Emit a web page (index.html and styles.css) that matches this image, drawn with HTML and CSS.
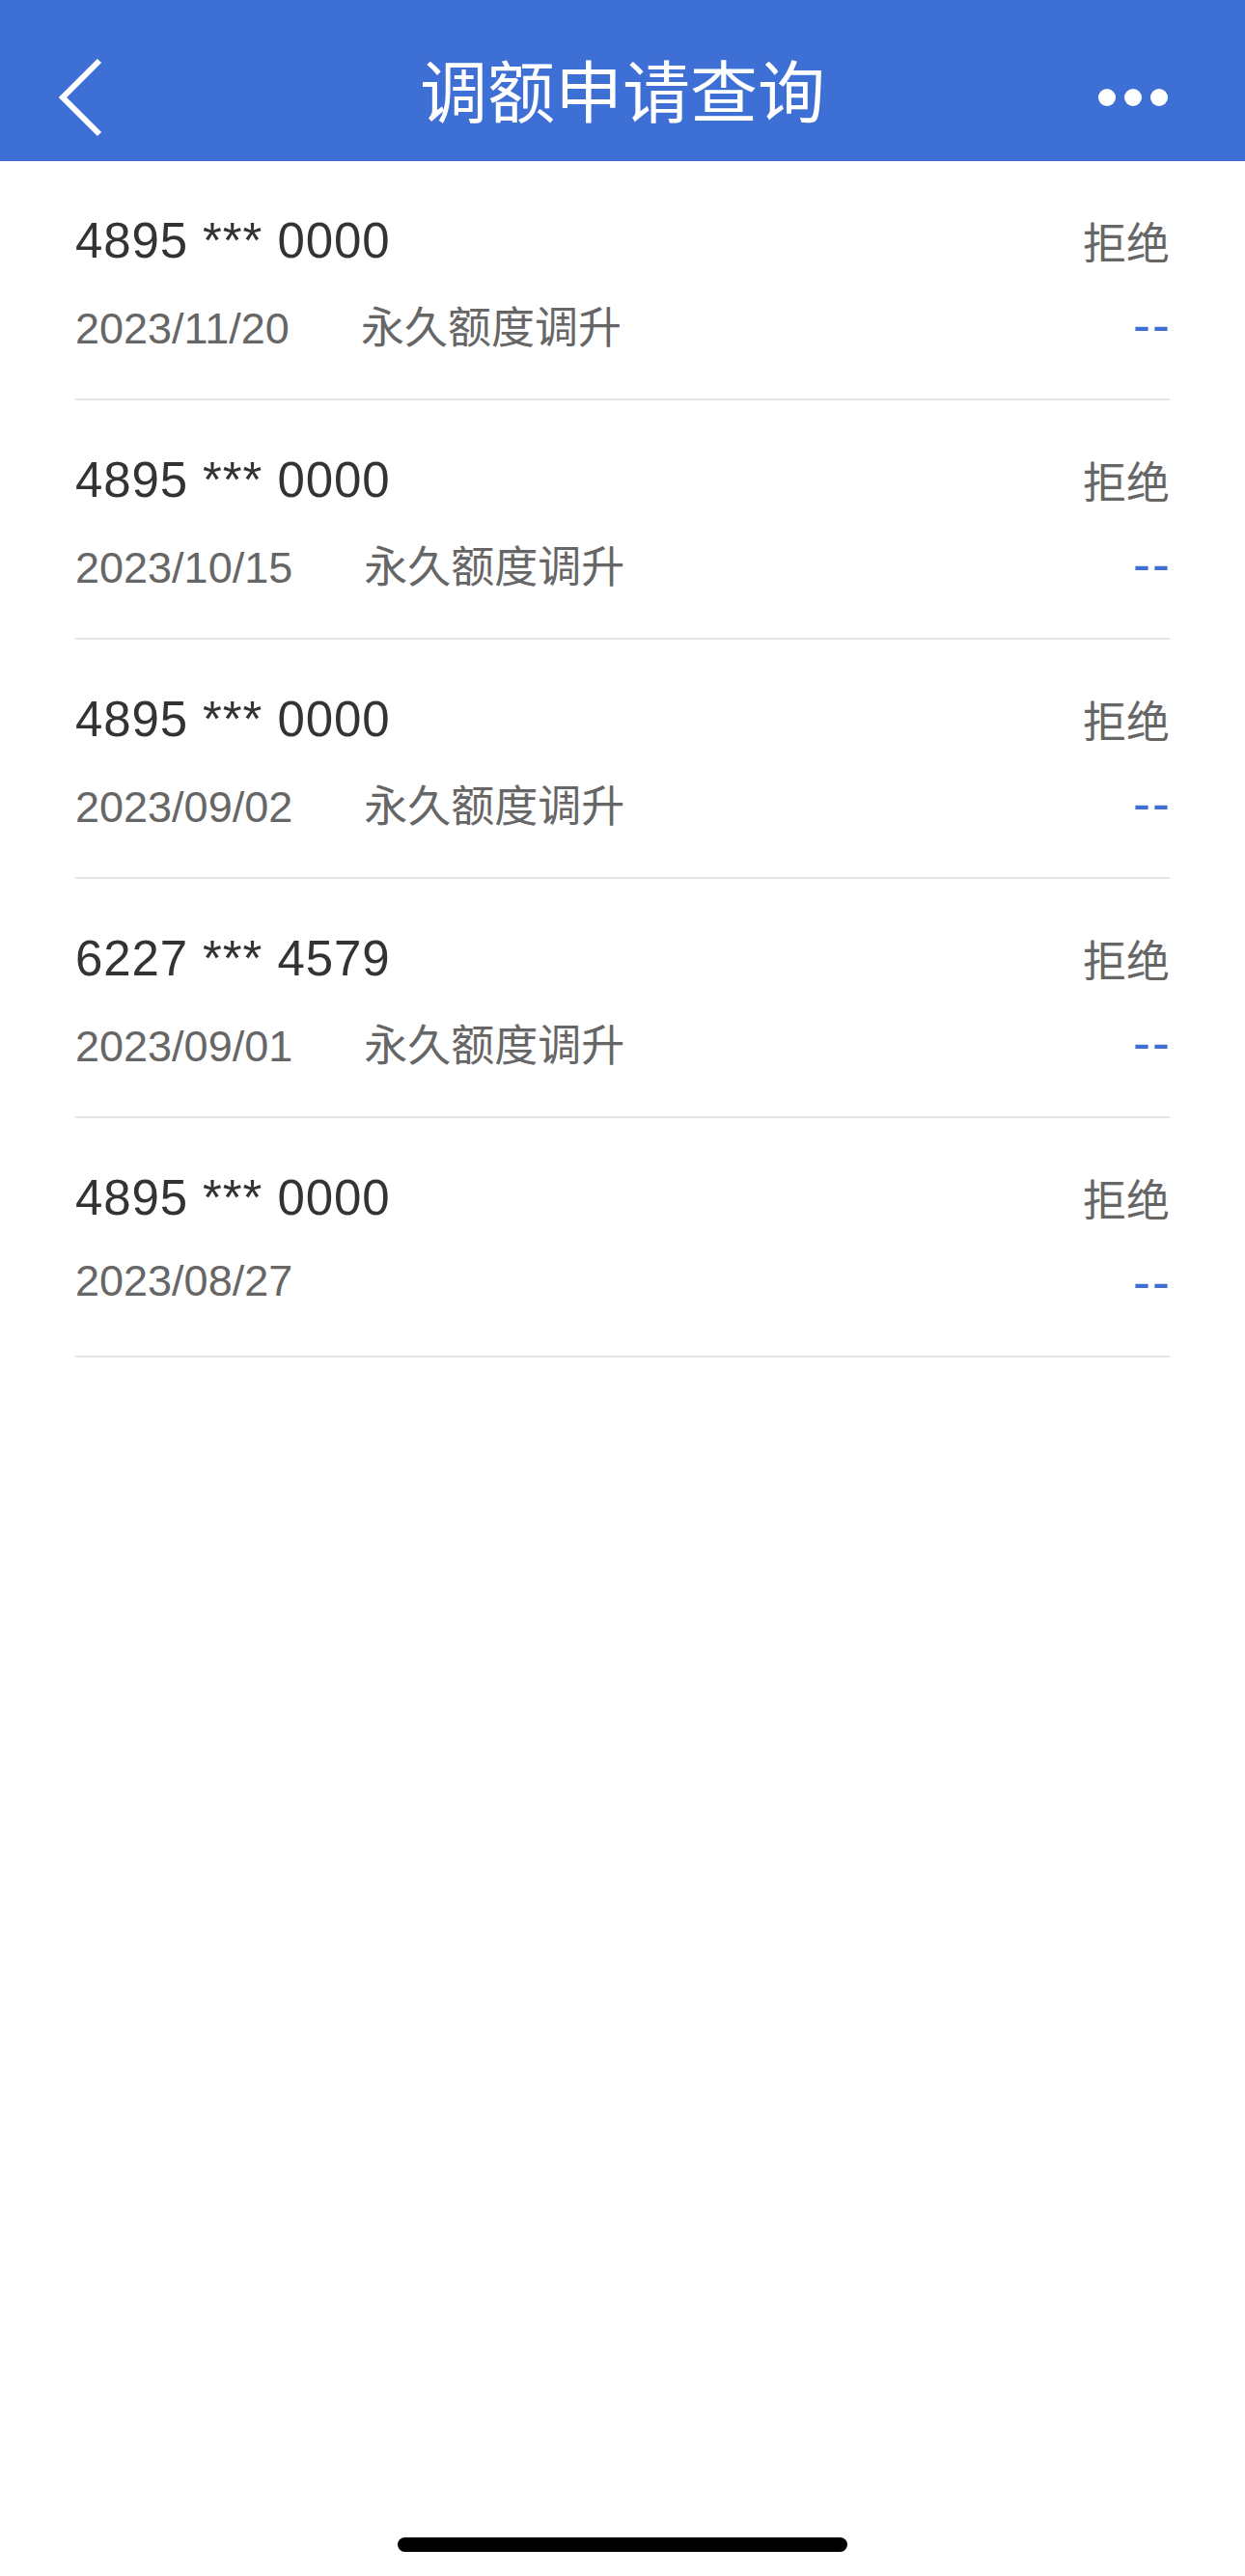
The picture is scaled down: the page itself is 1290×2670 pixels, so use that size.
FILE: index.html
```html
<!DOCTYPE html>
<html lang="zh-CN">
<head>
    <meta charset="utf-8">
    <title>调额申请查询</title>
    <meta name="viewport" content="width=device-width, initial-scale=1">
    <link rel="stylesheet" href="styles.css">
</head>
<body>
    <header class="nav-bar">
        <a class="nav-back" href="#">
            <svg width="56" height="90" viewBox="0 0 56 90">
                <polyline points="45,7 7,45 45,83" fill="none" stroke="#fff" stroke-width="6"/>
            </svg>
        </a>
        <h1 class="nav-title">调额申请查询</h1>
        <a class="nav-more" href="#">
            <svg width="80" height="20" viewBox="0 0 80 20">
                <circle cx="17" cy="10" r="9" fill="#fff"/>
                <circle cx="44" cy="10" r="9" fill="#fff"/>
                <circle cx="71" cy="10" r="9" fill="#fff"/>
            </svg>
        </a>
    </header>

    <ul class="record-list">
        <li class="record">
            <div class="record-top">
                <span class="card-no">4895 *** 0000</span>
                <span class="status">拒绝</span>
            </div>
            <div class="record-bottom">
                <span class="date">2023/11/20<span class="type">永久额度调升</span></span>
                <span class="amount">--</span>
            </div>
        </li>
        <li class="record">
            <div class="record-top">
                <span class="card-no">4895 *** 0000</span>
                <span class="status">拒绝</span>
            </div>
            <div class="record-bottom">
                <span class="date">2023/10/15<span class="type">永久额度调升</span></span>
                <span class="amount">--</span>
            </div>
        </li>
        <li class="record">
            <div class="record-top">
                <span class="card-no">4895 *** 0000</span>
                <span class="status">拒绝</span>
            </div>
            <div class="record-bottom">
                <span class="date">2023/09/02<span class="type">永久额度调升</span></span>
                <span class="amount">--</span>
            </div>
        </li>
        <li class="record">
            <div class="record-top">
                <span class="card-no">6227 *** 4579</span>
                <span class="status">拒绝</span>
            </div>
            <div class="record-bottom">
                <span class="date">2023/09/01<span class="type">永久额度调升</span></span>
                <span class="amount">--</span>
            </div>
        </li>
        <li class="record">
            <div class="record-top">
                <span class="card-no">4895 *** 0000</span>
                <span class="status">拒绝</span>
            </div>
            <div class="record-bottom">
                <span class="date">2023/08/27</span>
                <span class="amount">--</span>
            </div>
        </li>
    </ul>

    <div class="home-indicator"></div>
</body>
</html>
```

FILE: styles.css
```css
body {
    font-family: "Liberation Sans", "Noto Sans CJK SC", sans-serif;
    margin: 0;
    min-height: 100vh;
    display: flex;
    flex-direction: column;
    background-color: #ffffff;
    color: #333333;
}
.nav-bar {
    height: 167px;
    box-sizing: border-box;
    padding: 34px 58px 0;
    background-color: #3d6fd4;
    display: grid;
    grid-template-columns: 1fr auto 1fr;
    align-items: center;
}
.nav-back {
    display: flex;
    justify-self: start;
}
.nav-title {
    margin: 0 0 18px;
    font-family: "Noto Sans CJK SC", sans-serif;
    font-size: 70px;
    font-weight: 400;
    line-height: 1;
    color: #ffffff;
}
.nav-more {
    display: flex;
    justify-self: end;
    margin-right: 22px;
}
.record-list {
    list-style: none;
    margin: 0;
    padding: 0;
}
.record {
    margin: 0 78px;
    padding: 52px 0 52px;
    border-bottom: 2px solid #e5e5e5;
}
.record-top,
.record-bottom {
    display: flex;
    justify-content: space-between;
    align-items: center;
}
.record-top {
    height: 60px;
}
.record-bottom {
    height: 50px;
    margin-top: 32px;
}
.card-no {
    font-size: 51px;
    letter-spacing: 0.9px;
    color: #333333;
}
.status {
    font-size: 45px;
    color: #666666;
}
.date {
    font-size: 45px;
    color: #666666;
}
.type {
    margin-left: 74px;
}
.amount {
    font-size: 54px;
    letter-spacing: 2px;
    margin-right: -2px;
    color: #3d6fd4;
}
.home-indicator {
    margin-top: auto;
    margin-bottom: 25px;
    align-self: center;
    width: 466px;
    height: 15px;
    border-radius: 8px;
    background-color: #000000;
}
```
